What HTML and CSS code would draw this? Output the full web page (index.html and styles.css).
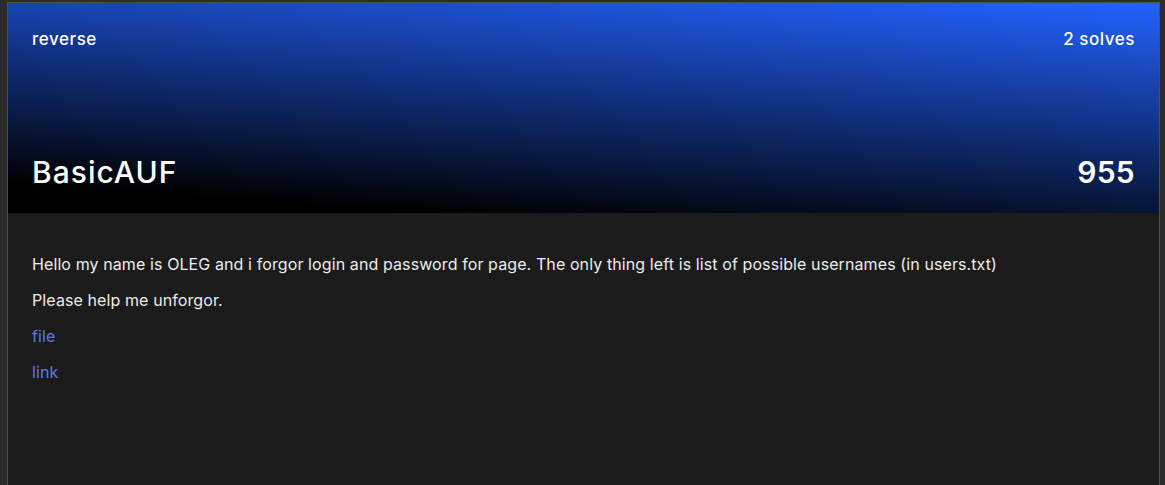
FILE: index.html
```html
<!DOCTYPE html>
<html lang="en">
<head>
<meta charset="utf-8">
<title>BasicAUF</title>
<link rel="stylesheet" href="styles.css">
</head>
<body>
<div class="card">
  <div class="card-header">
    <div class="row top">
      <span class="category">reverse</span>
      <span class="solves">2 solves</span>
    </div>
    <div class="row bottom">
      <h1 class="title">BasicAUF</h1>
      <span class="points">955</span>
    </div>
  </div>
  <div class="card-body">
    <p>Hello my name is OLEG and i forgor login and password for page. The only thing left is list of possible usernames (in users.txt)</p>
    <p>Please help me unforgor.</p>
    <p><a href="#" class="link">file</a></p>
    <p><a href="#" class="link">link</a></p>
  </div>
</div>
</body>
</html>
```

FILE: styles.css
```css
html, body {
  margin: 0;
  padding: 0;
  height: 100%;
  overflow: hidden;
}
body {
  background: #2c2c2c;
  font-family: Inter, "Noto Sans", sans-serif;
  color: #ececec;
  padding: 2px 5px 0 7px;
  box-sizing: border-box;
}
.card {
  border: 1px solid #4e4e4e;
  border-bottom: none;
  background: #1b1b1b;
  min-height: 600px;
}
.card-header {
  height: 210px;
  box-sizing: border-box;
  padding: 24px 24px 24px 24px;
  display: flex;
  flex-direction: column;
  justify-content: space-between;
  background: linear-gradient(4deg, #000 10%, #2162ff 100%);
  color: #fff;
}
.row {
  display: flex;
  justify-content: space-between;
  align-items: center;
}
.top {
  font-size: 17px;
  font-weight: 500;
  line-height: 24px;
  letter-spacing: 0.55px;
}
.bottom {
  line-height: 34px;
}
.title {
  margin: 0;
  font-size: 30px;
  font-weight: 500;
  line-height: 34px;
  letter-spacing: 1px;
}
.points {
  font-size: 30px;
  font-weight: 600;
  letter-spacing: 0.3px;
}
.card-body {
  padding: 27px 24px;
}
.card-body p {
  margin: 12px 0;
  font-size: 16px;
  line-height: 24px;
  letter-spacing: 0.1px;
}
.link {
  color: #5b7be6;
  text-decoration: none;
}
```
